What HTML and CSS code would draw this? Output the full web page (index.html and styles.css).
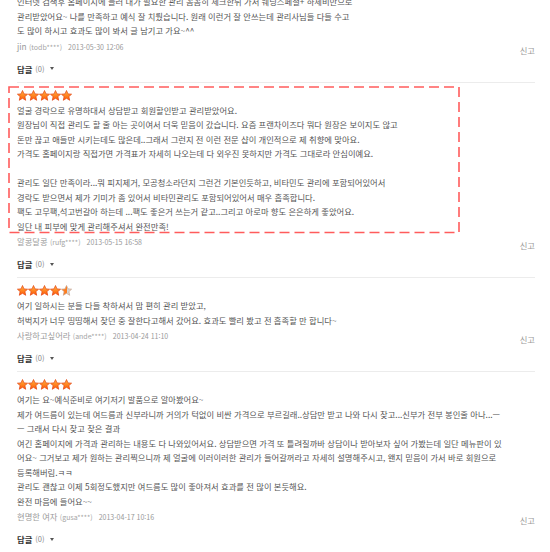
FILE: index.html
```html
<!DOCTYPE html>
<html lang="ko">
<head>
<meta charset="utf-8">
<title>후기</title>
<link rel="stylesheet" href="styles.css">
</head>
<body>
<div class="page">

  <div class="review first">
    <div class="text">인터넷 검색후 홈페이지에 들러 내가 필요한 관리 꼼꼼히 체크한뒤 가서 웨딩스페셜+ 하체비만으로<br>관리받았어요~ 나를 만족하고 예식 잘 치뤘습니다. 원래 이런거 잘 안쓰는데 관리사님들 다들 수고<br>도 많이 하시고 효과도 많이 봐서 글 남기고 가요~^^</div>
    <div class="meta-row"><span class="meta"><span class="name">jin</span> <span class="uid">(todb****)</span><span class="date">2013-05-30 12:06</span></span><span class="report">신고</span></div>
    <div class="reply"><b>답글</b> <span class="cnt">(0)</span><span class="caret"></span></div>
  </div>

  <div class="review">
    <div class="hl">
      <svg class="hl-box" aria-hidden="true"><rect class="hl-rect" x="1" y="1"></rect></svg>
      <div class="stars">
        <svg width="56" height="11" viewBox="0 0 56 11">
          <defs>
            <linearGradient id="gOn" x1="0" y1="0" x2="0" y2="1">
              <stop offset="0" stop-color="#ffb43c"/>
              <stop offset="1" stop-color="#ff5a0a"/>
            </linearGradient>
            <linearGradient id="gHalf" x1="0" y1="0" x2="1" y2="0">
              <stop offset="0" stop-color="#ff7d1e"/>
              <stop offset="0.5" stop-color="#ff7d1e"/>
              <stop offset="0.5" stop-color="#d6d6d6"/>
              <stop offset="1" stop-color="#d6d6d6"/>
            </linearGradient>
            <polygon id="star" points="5.5,0.5 7,3.9 10.6,4.2 7.9,6.6 8.7,10.3 5.5,8.3 2.3,10.3 3.1,6.6 0.4,4.2 4,3.9"/>
          </defs>
          <use href="#star" x="0" class="on"/>
          <use href="#star" x="11" class="on"/>
          <use href="#star" x="22" class="on"/>
          <use href="#star" x="33" class="on"/>
          <use href="#star" x="44" class="on"/>
        </svg>
      </div>
      <div class="text">얼굴 경락으로 유명하대서 상담받고 회원할인받고 관리받았어요.<br>원장님이 직접 관리도 할 줄 아는 곳이여서 더욱 믿음이 갔습니다. 요즘 프랜차이즈다 뭐다 원장은 보이지도 않고<br>돈만 끊고 애들만 시키는데도 많은데..그래서 그런지 전 이런 전문 샵이 개인적으로 제 취향에 맞아요.<br>가격도 홈페이지랑 직접가면 가격표가 자세히 나오는데 다 외우진 못하지만 가격도 그대로라 안심이예요.<br>&nbsp;<br>관리도 일단 만족이라...뭐 피지제거, 모공청소라던지 그런건 기본인듯하고, 비타민도 관리에 포함되어있어서<br>경락도 받으면서 제가 기미가 좀 있어서 비타민관리도 포함되어있어서 매우 흡족합니다.<br>팩도 고무팩,석고번갈아 하는데 ...팩도 좋은거 쓰는거 같고..그리고 아로마 향도 은은하게 좋았어요.<br>일단 내 피부에 맞게 관리해주셔서 완전만족!</div>
    </div>
    <div class="meta-row"><span class="meta"><span class="name">알콩달콩</span> <span class="uid">(rufg****)</span><span class="date">2013-05-15 16:58</span></span><span class="report">신고</span></div>
    <div class="reply"><b>답글</b> <span class="cnt">(0)</span><span class="caret"></span></div>
  </div>

  <div class="review">
    <div class="stars">
      <svg width="56" height="11" viewBox="0 0 56 11">
        <use href="#star" x="0" class="on"/>
        <use href="#star" x="11" class="on"/>
        <use href="#star" x="22" class="on"/>
        <use href="#star" x="33" class="on"/>
        <use href="#star" x="44" class="half"/>
      </svg>
    </div>
    <div class="text">여기 일하시는 분들 다들 착하셔서 맘 편히 관리 받았고,<br>허벅지가 너무 띵띵해서 찾던 중 잘한다고해서 갔어요. 효과도 빨리 봤고 전 흡족할 만 합니다~</div>
    <div class="meta-row"><span class="meta"><span class="name">사랑하고싶어라</span> <span class="uid">(ande****)</span><span class="date">2013-04-24 11:10</span></span><span class="report">신고</span></div>
    <div class="reply"><b>답글</b> <span class="cnt">(0)</span><span class="caret"></span></div>
  </div>

  <div class="review">
    <div class="stars">
      <svg width="56" height="11" viewBox="0 0 56 11">
        <use href="#star" x="0" class="on"/>
        <use href="#star" x="11" class="on"/>
        <use href="#star" x="22" class="on"/>
        <use href="#star" x="33" class="on"/>
        <use href="#star" x="44" class="on"/>
      </svg>
    </div>
    <div class="text">여기는 요~예식준비로 여기저기 발품으로 알아봤어요~<br>제가 여드름이 있는데 여드름과 신부라니까 거의가 턱없이 비싼 가격으로 부르길래..상담만 받고 나와 다시 찾고...신부가 전부 봉인줄 아나...—<br>— 그래서 다시 찾고 찾은 결과<br>여긴 홈페이지에 가격과 관리하는 내용도 다 나와있어서요. 상담받으면 가격 또 틀려질까바 상담이나 받아보자 싶어 가봤는데 일단 메뉴판이 있<br>어요~ 그거보고 제가 원하는 관리찍으니까 제 얼굴에 이러이러한 관리가 들어갈꺼라고 자세히 설명해주시고, 왠지 믿음이 가서 바로 회원으로<br>등록해버림.ㅋㅋ<br>관리도 괜찮고 이제 5회정도했지만 여드름도 많이 좋아져서 효과를 전 많이 본듯해요.<br>완전 마음에 들어요~~</div>
    <div class="meta-row"><span class="meta"><span class="name">현명한 여자</span> <span class="uid">(gusa****)</span><span class="date">2013-04-17 10:16</span></span><span class="report">신고</span></div>
    <div class="reply"><b>답글</b> <span class="cnt">(0)</span><span class="caret"></span></div>
  </div>

  <div class="review tail"></div>
</div>
</body>
</html>
```

FILE: styles.css
```css
html, body {
  margin: 0;
  padding: 0;
  background: #ffffff;
}
body {
  font-family: "Noto Sans CJK KR", "Noto Sans", sans-serif;
  font-size: 8.3px;
  color: #555555;
  overflow: hidden;
}
.page {
  width: 518px;
  margin: -6px 0 0 17px;
}
.review {
  border-top: 1px solid #ececec;
  padding-top: 7px;
  padding-bottom: 6px;
}
.review.first {
  border-top: 0;
  padding-top: 0;
}
.review.tail {
  padding: 0;
  height: 20px;
  background: #f6f6f6;
}
.hl {
  position: relative;
}
.hl-box {
  position: absolute;
  top: -4px;
  bottom: 0;
  left: -9px;
  width: 452px;
  height: calc(100% + 4px);
  overflow: visible;
}
.hl-rect {
  width: calc(100% - 2px);
  height: calc(100% - 2px);
  fill: none;
  stroke: #ff5c5c;
  stroke-width: 1.6;
  stroke-dasharray: 10 5;
}
.stars {
  height: 13px;
  display: flex;
  align-items: flex-start;
}
.stars svg {
  display: block;
}
.on {
  fill: url(#gOn);
  stroke: #e2400e;
  stroke-width: 0.7;
}
.half {
  fill: url(#gHalf);
  stroke: #c8a08a;
  stroke-width: 0.7;
}
.text {
  line-height: 14.5px;
  white-space: nowrap;
  color: #555555;
}
.meta-row {
  display: flex;
  justify-content: space-between;
  align-items: flex-start;
  height: 14px;
  line-height: 14px;
  margin-top: 1px;
}
.meta {
  color: #9a9a9a;
  white-space: nowrap;
}
.uid {
  font-size: 7px;
  color: #a5a5a5;
}
.date {
  font-size: 7px;
  color: #999999;
  margin-left: 6px;
}
.report {
  color: #9a9a9a;
  margin-top: 4px;
  margin-bottom: -4px;
}
.reply {
  margin-top: 9px;
  line-height: 14px;
  height: 14px;
  display: flex;
  align-items: center;
}
.reply b {
  color: #333333;
  font-weight: 700;
}
.cnt {
  color: #888888;
  font-size: 7.5px;
  margin-left: 3px;
}
.caret {
  display: inline-block;
  width: 0;
  height: 0;
  border-left: 2.5px solid transparent;
  border-right: 2.5px solid transparent;
  border-top: 3px solid #555555;
  margin-left: 5px;
}
```
